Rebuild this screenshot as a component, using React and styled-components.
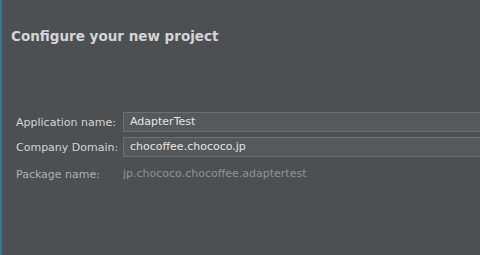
import styled, { createGlobalStyle } from "styled-components";

const GlobalStyle = createGlobalStyle`
	html, body {
		margin: 0;
		padding: 0;
		background: #4c5053;
	}
	body {
		font-family: "DejaVu Sans", "Liberation Sans", sans-serif;
	}
`;

// 화면 전체 패널
const Panel = styled.div`
	width: 480px;
	height: 255px;
	box-sizing: border-box;
	background: #4c5053;
	border-left: 2px solid #3f7590;
	padding: 27px 0 0 9px;
	overflow: hidden;
`;

const Title = styled.h1`
	margin: 0;
	font-size: 13.5px;
	font-weight: bold;
	color: #d2d4d5;
	line-height: 18px;
`;

const Form = styled.div`
	margin-top: 67px;
	padding-left: 5px;
	display: grid;
	grid-template-columns: 107px 1fr;
	row-gap: 5px;
	align-items: center;
`;

const Label = styled.label`
	font-size: 11px;
	color: ${(p) => (p.$dim ? "#aeb1b3" : "#d3d5d6")};
	margin-top: ${(p) => (p.$dim ? "2px" : "0")};
	white-space: nowrap;
`;

const Field = styled.div`
	height: 20px;
	box-sizing: border-box;
	margin-right: -2px;
	border: 1px solid #6c7073;
	border-right: none;
	background: #55595c;
	color: #e3e4e5;
	font-size: 11px;
	line-height: 18px;
	padding-left: 6px;
	white-space: nowrap;
`;

const Value = styled.div`
	font-size: 11px;
	color: #909395;
	line-height: 20px;
	margin-top: 2px;
`;

export default function App() {
	return (
		<>
			<GlobalStyle />
			<Panel>
				<Title>Configure your new project</Title>
				<Form>
					<Label>Application name:</Label>
					<Field>AdapterTest</Field>
					<Label>Company Domain:</Label>
					<Field>chocoffee.chococo.jp</Field>
					<Label $dim>Package name:</Label>
					<Value>jp.chococo.chocoffee.adaptertest</Value>
				</Form>
			</Panel>
		</>
	);
}
